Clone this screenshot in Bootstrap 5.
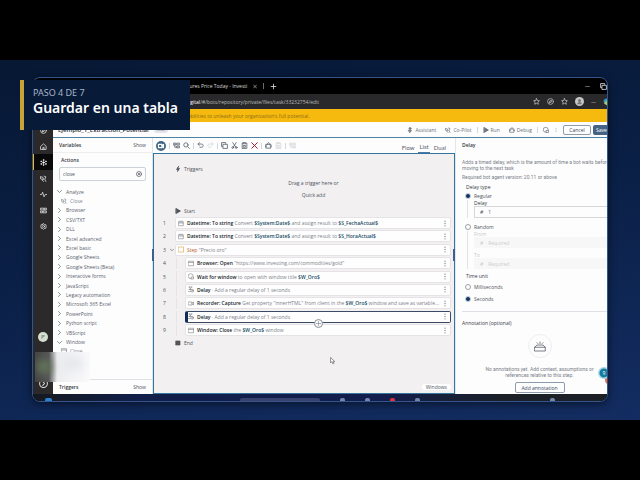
<!DOCTYPE html>
<html lang="es">
<head>
<meta charset="utf-8">
<meta name="viewport" content="width=device-width, initial-scale=1">
<title>Guardar en una tabla</title>
<link href="https://cdn.jsdelivr.net/npm/bootstrap@5.3.0/dist/css/bootstrap.min.css" rel="stylesheet">
<script src="https://cdn.jsdelivr.net/npm/bootstrap@5.3.0/dist/js/bootstrap.bundle.min.js" defer></script>
<style>
body{background:#000;font-family:"Open Sans","Noto Sans",sans-serif;font-size:5px;line-height:6px;color:#4d535b}
a{color:inherit;text-decoration:none}
button,input{font:inherit;color:inherit}
button{background:none;border:0;padding:0}
svg{display:block;flex:none;width:7px;height:7px;fill:none;stroke:currentColor;stroke-width:1.4;stroke-linecap:round;stroke-linejoin:round}
.letterbox{height:60px;flex:none}
.stage{background:linear-gradient(170deg,#071834 0%,#0a1f45 45%,#132d62 100%);padding:17px 32px 18px}
.shell{border:1px solid #35548c;border-radius:8px;overflow:hidden;background:#000;box-shadow:0 2px 8px #0008;flex:1;min-width:0}
.caption{left:20px;top:20px;width:170px;height:50px;background:#071a38;border-left:4px solid #c9a338;padding:5px 9px;z-index:5}
.kicker{font:9px/15px "Noto Sans",sans-serif;color:#a9b4c6}
.headline{font:600 14px/15px "Noto Sans",sans-serif;color:#fff;margin:0}
.tabs{height:16px;color:#ddd;padding-left:149px;gap:6px}
.address{height:15px;background:#29292b;color:#b9b9b9;padding-left:153px;gap:7px}
.promo{height:13px;background:#f6b90e;color:#8d6d18;padding-left:155px}
.rail{width:20px;flex:none;background:#2b292a;color:#ddd;padding-bottom:3px}
.rail a{height:16px}
.rail a.current{background:#090909;border-left:1px solid #f6b90e;color:#fff}
.avatar{width:10px;height:10px;line-height:10px;background:#d5dfd0;font-size:4px;margin-bottom:29px}
.work{background:#fdfdfe;min-width:0}
.appbar{height:16px;border-bottom:1px solid #4b83a3;gap:5px;padding-left:5px;color:#6a727b}
.appbar button{gap:2px}
.appbar svg{width:6px;height:6px}
.appbar .small-dots{width:4px}
.filename{font-weight:600;font-size:6px;color:#262b33}
.pill{background:#e4e5ec;border-radius:3px;padding:0 3px;font-size:4px}
.side{width:100px;flex:none;border-right:1px solid #dfe2e6}
.strong{font-weight:600;color:#353a42}
.sidehead{height:15px;border-bottom:1px solid #eee;padding:0 6px}
.search{height:14px;border:1px solid #cdd1d8;border-radius:2px;padding:0 3px;margin:4px 6px 0}
.search svg{width:6px;height:6px}
.search input,.field input{border:0;background:none;outline:0;min-width:0;padding:0}
.tree{height:169px;margin:6px 0 0;padding:0 4px;color:#59626c}
.tree a{height:9px;gap:4px}
.tree svg{width:5px;height:5px}
.tree .leaf{padding-left:4px;gap:3px;color:#858c94}
.tree .leaf svg{width:6px;height:6px}
.tools{height:15px;gap:3px;padding:0 8px 0 3px;color:#59626d}
.divide{width:1px;height:6px;background:#d3d6da}
.remove{color:#b0142f}
.mode{height:15px;padding:4px 1px 0;font-family:Lato,sans-serif;font-size:6px}
.mode.current{border-bottom:1px solid #4b77aa}
.canvas{background:#f2f0f1;border:1px solid #33759c;padding:12px 3px 3px 6px;flex:1}
.grip{width:2px;height:12px;background:#3c5f93;top:95px}
.grip.start{left:-2px}
.grip.end{right:-1px}
.marker{padding-left:15px;gap:3px}
.marker svg{width:6px;height:6px}
.marker.begin{margin:10px 0 3px}
.hint{padding-left:16px}
.quick{margin-top:6px}
.steps{display:grid;grid-template-columns:minmax(0,1fr);align-content:space-between;height:119px;padding:0;margin:0}
.num{width:15px;padding-left:3px;font-size:5px;flex:none}
.step{height:12px;background:#fefefe;border:1px solid #e5e3e6;border-radius:2px;padding:0 2px;gap:3px;color:#7c8188;min-width:0}
.step svg{width:6px;stroke-width:1.2}
.step b{font-weight:600;color:#20252b}
.step b.value{color:#174a63}
.nested{margin-left:1px;border-left:1px solid #e6e4e6;padding-left:8px;min-width:0}
.chosen{border:1px solid #3c4b65;border-left:3px solid #102c57;padding-left:0}
.plus{left:calc(50% - 5px);top:7px;width:9px;height:9px;border:1px solid #8b929b;background:#fafafa;border-radius:50%;z-index:2}
.plus svg{width:7px;stroke-width:1}
.props{width:152px;flex:none;padding:4px 0 0 6px;border-left:1px solid #e4e6ea}
.radio{width:6px;height:6px;appearance:none;border:1px solid #9aa2ab;border-radius:50%;margin:0;flex:none}
.radio:checked{background:#12335c;border-color:#c6d5e2}
.field{height:12px;border:1px solid #d5d7db;border-right:0;padding:0 5px;gap:5px}
.field.off{height:11px;background:#f7f7f8;border-color:#f7f7f8;color:#ccc}
.group{border-left:1px solid #e1e2e5;margin-left:5px;padding-left:6px}
.opt{gap:3px;height:8px;margin:2px 0 0 3px}
.opt.second{margin-top:5px}
.opt.unit{margin-top:4px}
.note{font-family:Roboto,sans-serif;color:#7a8087}
.about{margin:11px 0 3px}
.ring{width:24px;height:24px;border:1px solid #eceef0;border-radius:50%}
.empty{padding-left:10px}
.outline{border:1px solid #8c9bad;border-radius:2px;color:#35455c}
.cancel{width:28px;height:10px}
.add{width:50px;height:11px}
.save{background:#456484;color:#fff;height:10px;width:14px;border-radius:2px 0 0 2px;padding-left:3px;margin-left:2px;text-align:left}
.taskbar{height:7px;background:linear-gradient(90deg,#15191f 0%,#111e49 18%,#131d4d 60%,#1b2026 82%);padding:4px 52px 0 12px;gap:20px}
.taskbar i{width:5px;height:3px;border-radius:2px 2px 0 0;background:#7188aa}
.taskbar .launch{width:7px;background:#2781cf}
.taskbar .query{width:80px;margin-left:168px;background:#39426c}
.taskbar .alert-dot{background:#e0313c}
.smudge{left:35px;top:292px;width:55px;height:30px;overflow:hidden;z-index:4;background:linear-gradient(90deg,#444 0%,#555 25%,#ededf0 40%,#fafafb 100%)}
.smudge i{position:absolute;left:2px;top:8px;width:14px;height:13px;background:#64765b;filter:blur(4px)}
.smudge i+i{left:28px;top:5px;width:20px;background:#e5e8ec}
.badge9{left:598px;top:307px;width:11px;height:18px;clip-path:inset(0 2px 0 0);z-index:4}
</style>
</head>
<body class="d-flex flex-column min-vh-100">
<svg class="d-none" aria-hidden="true">
<symbol id="right" viewBox="0 0 10 10"><path d="M3 1l4 4-4 4"/></symbol>
<symbol id="down" viewBox="0 0 10 10"><path d="M1 3l4 4 4-4"/></symbol>
<symbol id="x" viewBox="0 0 10 10"><path d="M1 1l8 8M9 1L1 9"/></symbol>
<symbol id="cx" viewBox="0 0 12 12"><circle cx="6" cy="6" r="5"/><path d="M4 4l4 4M8 4l-4 4"/></symbol>
<symbol id="plus" viewBox="0 0 12 12"><path d="M6 2v8M2 6h8"/></symbol>
<symbol id="dots" viewBox="0 0 10 12"><g fill="currentColor" stroke="none"><circle cx="5" cy="2" r="1.1"/><circle cx="5" cy="6" r="1.1"/><circle cx="5" cy="10" r="1.1"/></g></symbol>
<symbol id="play" viewBox="0 0 10 10"><path d="M2 1l7 4-7 4z" fill="currentColor"/></symbol>
<symbol id="cal" viewBox="0 0 12 12"><path d="M1.5 2.5h9v8h-9zM1.5 5h9M4 1v2M8 1v2"/></symbol>
<symbol id="win" viewBox="0 0 12 12"><path d="M1 1.500h10v9H1zM1 4h10"/></symbol>
<symbol id="delay" viewBox="0 0 12 12"><path d="M2 1h6M2 6h4M2.500 1c0 3 4 3 4 5M7.500 1c0 3-5 2-5 5M1 10h4"/><circle cx="8.500" cy="8.500" r="2.700"/><path d="M8.500 7v2h1"/></symbol>
<symbol id="wait" viewBox="0 0 12 12"><path d="M6 10.500A5 5 0 1 1 10.500 6"/><path d="M7 7h4v4H7z"/></symbol>
<symbol id="cam" viewBox="0 0 12 12"><path d="M1 3h7v6H1zM8 5l3-2v6L8 7"/></symbol>
<symbol id="node" viewBox="0 0 12 12"><g fill="currentColor" stroke-width="1"><circle cx="6" cy="6" r="1.500"/><circle cx="6" cy="1.800" r=".8"/><circle cx="6" cy="10.200" r=".8"/><circle cx="2" cy="4" r=".8"/><circle cx="10" cy="4" r=".8"/><circle cx="2" cy="8.500" r=".8"/><circle cx="10" cy="8.500" r=".8"/></g></symbol>
<symbol id="person" viewBox="0 0 12 12"><circle cx="6" cy="3" r="2" fill="currentColor"/><path d="M3 6.500h6L6 11z" fill="currentColor"/></symbol>
<symbol id="spark" viewBox="0 0 12 12"><path d="M1 3l4 1 1 4-4-1zM7 2l3 1-1 3M8 7l2 4M4 9l2 2"/></symbol>
<symbol id="home" viewBox="0 0 12 12"><path d="M1.500 5.500L6 1.500l4.500 4V11h-9zM5 11V7.500h2V11"/></symbol>
<symbol id="compass" viewBox="0 0 12 12"><circle cx="6" cy="6" r="5"/><path d="M4 8l1-3 3-1-1 3z"/></symbol>
<symbol id="pulse" viewBox="0 0 12 12"><path d="M0 6h3l1.500-4 2.500 8L9 6h3"/></symbol>
<symbol id="blocks" viewBox="0 0 12 12"><path d="M1.500 2h5v3h-5zM8 2h3v3H8zM1.500 7h3v3h-3zM6 7h5v3H6z"/></symbol>
<symbol id="gear" viewBox="0 0 12 12"><path d="M6 1l1.500 1.500 2.500.5.500 3-.500 3-2.500.500L6 11 4.500 9.500 2 9l-.500-3L2 3l2.500-.500z"/><circle cx="6" cy="6" r="1.800"/></symbol>
<symbol id="next" viewBox="0 0 12 12"><circle cx="6" cy="6" r="5.200"/><path d="M5 3.500L7.500 6 5 8.500"/></symbol>
<symbol id="find" viewBox="0 0 12 12"><circle cx="5" cy="5" r="3.700"/><path d="M8 8l3 3"/></symbol>
<symbol id="undo" viewBox="0 0 12 12"><path d="M4 1L1.500 3.500 4 6M2 3.500h5.500c4 0 4 5.500 0 5.500H5"/></symbol>
<symbol id="redo" viewBox="0 0 12 12"><path d="M8 1l2.500 2.500L8 6M10 3.500H4.500c-4 0-4 5.500 0 5.500H7"/></symbol>
<symbol id="copy" viewBox="0 0 12 12"><path d="M4 4h7v7H4zM2.500 8H1V1h7v1.500"/></symbol>
<symbol id="cut" viewBox="0 0 12 12"><circle cx="3" cy="9.500" r="1.500"/><circle cx="9" cy="9.500" r="1.500"/><path d="M4 8.500L9 1M8 8.500L3 1"/></symbol>
<symbol id="paste" viewBox="0 0 12 12"><path d="M3.500 2H2v9h8V2H8.500M4 1h4v2H4zM4.500 6h3v3h-3z"/></symbol>
<symbol id="flow" viewBox="0 0 12 12"><path d="M1 2h4v3H1zM7 2h4v3H7zM3 5v4h4M7 7h4v3H7z"/></symbol>
<symbol id="star" viewBox="0 0 12 12"><path d="M6 1l1.500 3.300 3.500.4-2.600 2.400.7 3.600L6 9l-3.100 1.700.7-3.600L1 4.700l3.500-.4z"/></symbol>
<symbol id="bug" viewBox="0 0 12 12"><path d="M2 4h8v6.500H2zM4 4c0-4 4-4 4 0M1 7h2M9 7h2"/></symbol>
<symbol id="bolt" viewBox="0 0 12 12"><path d="M7 1L3 7h3l-1 4 4-6H6z" fill="currentColor"/></symbol>
</svg>
<div class="letterbox"></div>
<main class="stage position-relative flex-grow-1 d-flex">
<section class="caption position-absolute"><div class="kicker">PASO 4 DE 7</div><h1 class="headline text-nowrap">Guardar en una tabla</h1></section>
<div class="shell d-flex flex-column">
<div class="tabs d-flex align-items-center text-nowrap"><span>Futures Price Today - Investi</span><svg style="width:4px"><use href="#x"/></svg><span class="divide opacity-50"></span><svg><use href="#plus"/></svg><span class="ms-auto">—</span><svg class="ms-1"><use href="#copy"/></svg></div>
<div class="address d-flex align-items-center text-nowrap"><span><b class="fw-normal text-white">digital</b>/#/bots/repository/private/files/task/33232754/edit</span><svg class="ms-auto"><use href="#star"/></svg><svg><use href="#compass"/></svg><svg><use href="#star"/></svg>
<svg viewBox="0 0 12 12" style="width:9px;height:9px"><circle cx="6" cy="6" r="6" fill="#c8c6c6" stroke="none"/><circle cx="6" cy="4.500" r="2" fill="#777" stroke="none"/><path d="M3 9.500c0-4 6-4 6 0z" fill="#777" stroke="none"/></svg><span>—</span><svg viewBox="0 0 7 12" style="width:4px;height:8px"><path d="M7 0C1 0 0 5 2 8l5 4z" fill="#2e9cc8" stroke="none"/><path d="M2 8l5-5v9z" fill="#b8c84c" stroke="none"/></svg></div>
<div class="promo d-flex align-items-center text-nowrap">abilities to unleash your organization's full potential.</div>
<div class="d-flex flex-grow-1">
<nav class="rail d-flex flex-column" aria-label="Principal">
<a href="#" class="d-flex align-items-center justify-content-center"><svg><use href="#compass"/></svg></a>
<a href="#" class="d-flex align-items-center justify-content-center"><svg><use href="#home"/></svg></a>
<a href="#" class="current d-flex align-items-center justify-content-center"><svg><use href="#node"/></svg></a>
<a href="#" class="d-flex align-items-center justify-content-center"><svg><use href="#spark"/></svg></a>
<a href="#" class="d-flex align-items-center justify-content-center"><svg><use href="#pulse"/></svg></a>
<a href="#" class="d-flex align-items-center justify-content-center"><svg><use href="#blocks"/></svg></a>
<a href="#" class="d-flex align-items-center justify-content-center"><svg><use href="#gear"/></svg></a>
<span class="avatar mt-auto mx-auto rounded-circle text-center text-dark">JP</span>
<a href="#" class="d-flex align-items-center justify-content-center mt-1"><svg style="width:9px;height:9px"><use href="#next"/></svg></a>
</nav>
<div class="work flex-grow-1 d-flex flex-column">
<header class="appbar d-flex align-items-center text-nowrap"><span class="filename">Ejemplo_1_Extraccion_Potential</span><span class="pill">new</span>
<button class="ms-auto me-1 d-flex align-items-center"><svg><use href="#person"/></svg>Assistant</button><button class="d-flex align-items-center"><svg><use href="#spark"/></svg>Co-Pilot</button><span class="divide"></span><button class="me-1 d-flex align-items-center"><svg><use href="#play"/></svg>Run</button><button class="d-flex align-items-center"><svg><use href="#bug"/></svg>Debug</button><span class="divide"></span><svg><use href="#wait"/></svg><svg class="small-dots"><use href="#dots"/></svg>
<span class="d-flex"><button class="outline cancel">Cancel</button><button class="save overflow-hidden">Save</button></span></header>
<div class="d-flex flex-grow-1">
<aside class="side d-flex flex-column">
<div class="sidehead d-flex align-items-center justify-content-between"><span class="strong">Variables</span><a href="#">Show</a></div>
<div class="strong pt-1 ps-1 ms-1">Actions</div>
<div class="search d-flex align-items-center"><input class="flex-grow-1" aria-label="Buscar acciones" value="close"><svg><use href="#cx"/></svg></div>
<nav class="tree d-flex flex-column justify-content-between text-nowrap" aria-label="Acciones">
<a href="#" class="d-flex align-items-center"><svg><use href="#down"/></svg>Analyze</a><a href="#" class="leaf d-flex align-items-center"><svg><use href="#spark"/></svg>Close</a>
<a href="#" class="d-flex align-items-center"><svg><use href="#right"/></svg>Browser</a><a href="#" class="d-flex align-items-center"><svg><use href="#right"/></svg>CSV/TXT</a><a href="#" class="d-flex align-items-center"><svg><use href="#right"/></svg>DLL</a><a href="#" class="d-flex align-items-center"><svg><use href="#right"/></svg>Excel advanced</a><a href="#" class="d-flex align-items-center"><svg><use href="#right"/></svg>Excel basic</a><a href="#" class="d-flex align-items-center"><svg><use href="#right"/></svg>Google Sheets</a><a href="#" class="d-flex align-items-center"><svg><use href="#right"/></svg>Google Sheets (Beta)</a><a href="#" class="d-flex align-items-center"><svg><use href="#right"/></svg>Interactive forms</a><a href="#" class="d-flex align-items-center"><svg><use href="#right"/></svg>JavaScript</a><a href="#" class="d-flex align-items-center"><svg><use href="#right"/></svg>Legacy automation</a><a href="#" class="d-flex align-items-center"><svg><use href="#right"/></svg>Microsoft 365 Excel</a><a href="#" class="d-flex align-items-center"><svg><use href="#right"/></svg>PowerPoint</a><a href="#" class="d-flex align-items-center"><svg><use href="#right"/></svg>Python script</a><a href="#" class="d-flex align-items-center"><svg><use href="#right"/></svg>VBScript</a>
<a href="#" class="d-flex align-items-center"><svg><use href="#down"/></svg>Window</a><a href="#" class="leaf d-flex align-items-center"><svg><use href="#win"/></svg>Close</a></nav>
<div class="sidehead border-top border-bottom-0 d-flex align-items-center justify-content-between mt-auto"><span class="strong">Triggers</span><a href="#">Show</a></div>
</aside>
<section class="flex-grow-1 d-flex flex-column" style="min-width:0">
<div class="tools d-flex align-items-center">
<svg viewBox="0 0 12 12" style="width:10px;height:10px"><circle cx="6" cy="6" r="6" fill="#416684" stroke="none"/><path d="M3 4h4v4H3zM7 6l2-2v4z" stroke="#fff"/></svg><span class="divide"></span><svg><use href="#flow"/></svg><svg><use href="#find"/></svg><span class="divide"></span><svg><use href="#undo"/></svg><svg class="opacity-25"><use href="#redo"/></svg><span class="divide"></span><svg><use href="#copy"/></svg><svg><use href="#cut"/></svg><svg><use href="#paste"/></svg><svg class="remove"><use href="#x"/></svg><span class="divide"></span><svg><use href="#bug"/></svg><svg class="opacity-25"><use href="#paste"/></svg><span class="divide"></span><svg class="opacity-25"><use href="#flow"/></svg>
<button class="mode ms-auto">Flow</button><button class="mode current">List</button><button class="mode">Dual</button></div>
<div class="canvas position-relative d-flex flex-column">
<i class="grip start position-absolute"></i><i class="grip end position-absolute"></i>
<div class="marker d-flex align-items-center"><svg><use href="#bolt"/></svg>Triggers</div>
<div class="hint text-center mt-2">Drag a trigger here or</div><button class="hint quick text-center">Quick add</button>
<div class="marker begin d-flex align-items-center"><svg><use href="#play"/></svg>Start</div>
<ol class="steps list-unstyled text-nowrap">
<li class="d-flex align-items-center"><span class="num">1</span><div class="step flex-grow-1 d-flex align-items-center"><svg><use href="#cal"/></svg><span><b>Datetime: To string</b> Convert <b class="value">$System:Date$</b> and assign result to <b class="value">$S_FechaActual$</b></span><svg class="ms-auto"><use href="#dots"/></svg></div></li>
<li class="d-flex align-items-center"><span class="num">2</span><div class="step flex-grow-1 d-flex align-items-center"><svg><use href="#cal"/></svg><span><b>Datetime: To string</b> Convert <b class="value">$System:Date$</b> and assign result to <b class="value">$S_HoraActual$</b></span><svg class="ms-auto"><use href="#dots"/></svg></div></li>
<li class="d-flex align-items-center"><span class="num d-flex align-items-center gap-1">3<svg style="width:4px;height:4px"><use href="#down"/></svg></span><div class="step flex-grow-1 d-flex align-items-center"><svg viewBox="0 0 12 12" style="color:#dc9e41"><path d="M1 1h10v10H1z"/></svg><span><span style="color:#b85a24">Step</span> "Precio oro"</span><svg class="ms-auto"><use href="#dots"/></svg></div></li>
<li class="d-flex align-items-center"><span class="num">4</span><div class="nested flex-grow-1"><div class="step d-flex align-items-center"><svg><use href="#win"/></svg><span><b>Browser: Open</b> "https://www.investing.com/commodities/gold"</span><svg class="ms-auto"><use href="#dots"/></svg></div></div></li>
<li class="d-flex align-items-center"><span class="num">5</span><div class="nested flex-grow-1"><div class="step d-flex align-items-center"><svg><use href="#wait"/></svg><span><b>Wait for window</b> to open with window title <b class="value">$W_Oro$</b></span><svg class="ms-auto"><use href="#dots"/></svg></div></div></li>
<li class="d-flex align-items-center"><span class="num">6</span><div class="nested flex-grow-1"><div class="step d-flex align-items-center"><svg><use href="#delay"/></svg><span><b>Delay</b> · Add a regular delay of 1 seconds</span><svg class="ms-auto"><use href="#dots"/></svg></div></div></li>
<li class="d-flex align-items-center"><span class="num">7</span><div class="nested flex-grow-1"><div class="step d-flex align-items-center"><svg><use href="#cam"/></svg><span><b>Recorder: Capture</b> Get property "innerHTML" from client in the <b class="value">$W_Oro$</b> window and save as variable...</span><svg class="ms-auto"><use href="#dots"/></svg></div></div></li>
<li class="d-flex align-items-center"><span class="num">8</span><div class="nested flex-grow-1"><div class="step chosen position-relative d-flex align-items-center"><svg><use href="#delay"/></svg><span><b>Delay</b> · Add a regular delay of 1 seconds</span><svg class="ms-auto"><use href="#dots"/></svg><button class="plus position-absolute" aria-label="Añadir paso"><svg><use href="#plus"/></svg></button></div></div></li>
<li class="d-flex align-items-center"><span class="num">9</span><div class="nested flex-grow-1"><div class="step d-flex align-items-center"><svg><use href="#win"/></svg><span><b>Window: Close</b> the <b class="value">$W_Oro$</b> window</span><svg class="ms-auto"><use href="#dots"/></svg></div></div></li>
</ol>
<div class="marker d-flex align-items-center mt-1"><svg viewBox="0 0 12 12"><path d="M2 2h8v8H2z" fill="#555"/></svg>End</div>
<svg viewBox="0 0 8 12" class="align-self-center mt-2" style="width:5px;height:14px;margin-left:54px"><path d="M1 1v8l2-2 2 4 1-1-1-3h2z" stroke-width="1" fill="#fff"/></svg>
<span class="mt-auto align-self-end bg-white rounded-1 px-1">Windows</span>
</div></section>
<aside class="props d-flex flex-column text-nowrap">
<div class="strong">Delay</div>
<p class="note about">Adds a timed delay, which is the amount of time a bot waits before<br>moving to the next task</p>
<p class="note mb-1">Required bot agent version: 20.11 or above</p>
<div class="ps-1 strong fw-normal">Delay type</div>
<label class="opt d-flex align-items-center"><input class="radio" type="radio" name="kind" checked>Regular</label>
<div class="group"><label for="d" class="d-block strong fw-normal">Delay</label><div class="field d-flex align-items-center"><i>#</i><input id="d" value="1"></div></div>
<label class="opt second d-flex align-items-center"><input class="radio" type="radio" name="kind">Random</label>
<div class="group" style="color:#c5c8cc"><label for="f" class="d-block">From</label><div class="field off d-flex align-items-center"><i>#</i><input id="f" value="Required" disabled></div><label for="t" class="d-block mt-1">To</label><div class="field off d-flex align-items-center"><i>#</i><input id="t" value="Required" disabled></div></div>
<div class="ps-1 mt-1 strong fw-normal">Time unit</div>
<label class="opt unit d-flex align-items-center"><input class="radio" type="radio" name="unit">Milliseconds</label>
<label class="opt unit d-flex align-items-center"><input class="radio" type="radio" name="unit" checked>Seconds</label>
<div class="border-top mt-2 pt-2 strong fw-normal">Annotation (optional)</div>
<div class="empty d-flex flex-column align-items-center">
<div class="ring mt-2 d-flex align-items-center justify-content-center"><svg viewBox="0 0 16 14" style="width:12px;height:11px"><path d="M1 8h14v5H1zM1 8l3-3h8l3 3M8 1v2M4 2l1 1M12 2l-1 1" stroke-width="1"/></svg></div>
<p class="note text-center mb-0 mt-2">No annotations yet. Add context, assumptions or<br>references relative to this step.</p>
<button class="outline add mt-1">Add annotation</button></div>
</aside>
</div></div></div>
<div class="taskbar d-flex"><i class="launch"></i><i class="query"></i><i></i><i></i><i class="alert-dot"></i><i></i><i class="ms-auto"></i></div>
</div>
<div class="smudge position-absolute"><i></i><i></i></div>
<svg class="badge9 position-absolute" viewBox="0 0 11 18"><circle cx="12" cy="13" r="5" fill="#e8693c" stroke="none"/><circle cx="6" cy="6" r="6" fill="#a7d8e4" stroke="none"/><circle cx="6" cy="6" r="4.500" fill="#137b9c" stroke="none"/><text x="4.500" y="8" font-size="5" fill="#fff" stroke="none">9</text></svg>
</main>
<div class="letterbox"></div>
</body>
</html>
